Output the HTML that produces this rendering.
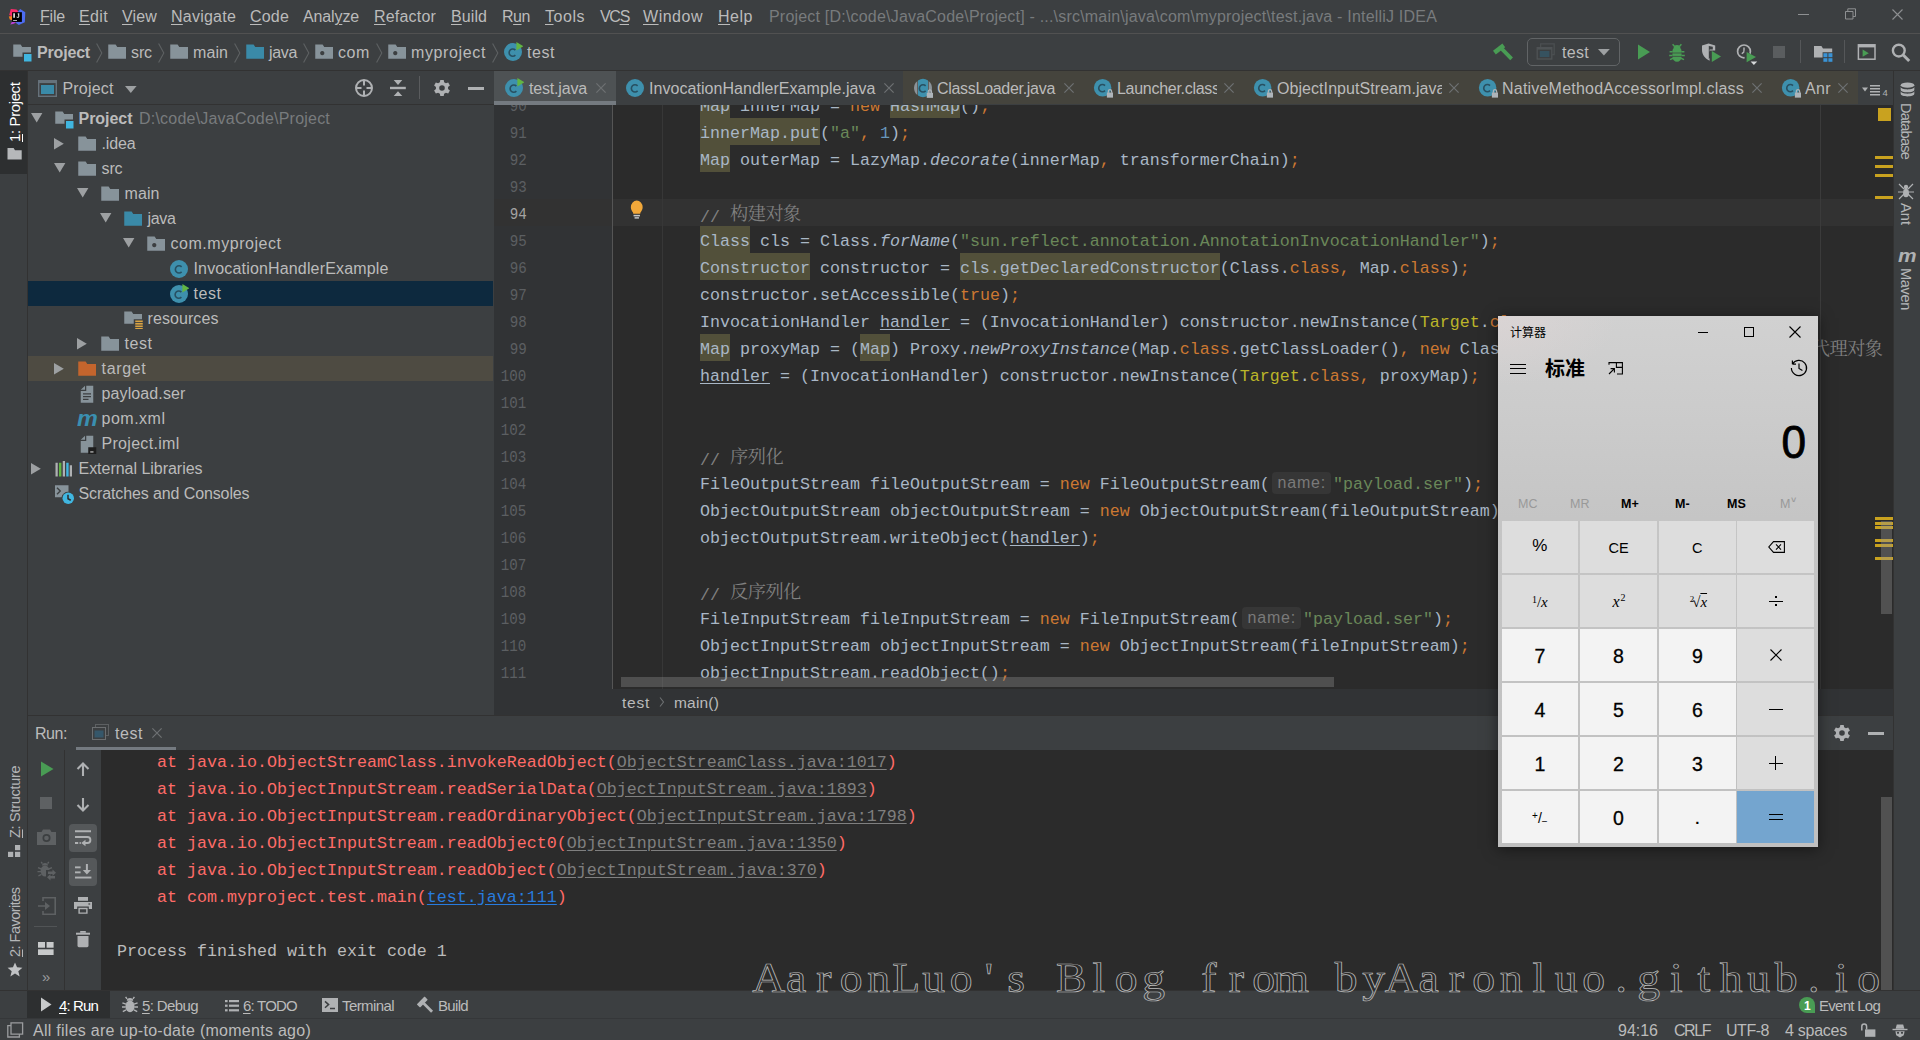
<!DOCTYPE html>
<html lang="en"><head><meta charset="utf-8"><title>Project - test.java - IntelliJ IDEA</title>
<style>
html,body{margin:0;padding:0;background:#3c3f41;}
body{width:1920px;height:1040px;overflow:hidden;font-family:"Liberation Sans","Noto Sans CJK SC",sans-serif;}
#root{position:relative;width:1920px;height:1040px;overflow:hidden;background:#3c3f41;}
#root div,#root svg,#root span.a{position:absolute;white-space:pre;}
#root div.box{overflow:hidden;}
.mono{font-family:"Liberation Mono","Noto Sans CJK SC",monospace;font-size:16.667px;}
.cj{font-family:"Noto Serif CJK SC","Noto Sans CJK SC",serif;font-size:18.200px;letter-spacing:-.5px;position:relative;top:-1.500px;}
u{text-decoration:underline;text-underline-offset:2px;}
i{font-style:italic;}
.k{color:#cc7832}.s{color:#6a8759}.n{color:#6897bb}.c{color:#808080}.y{color:#bbb529}
.h{background:#52503a;}

</style></head>
<body>
<div id="root">
<!-- menu bar -->
<div style="left:0px;top:33px;width:1920px;height:1px;background:#515151;"></div>
<svg style="left:8px;top:8px;" width="18" height="18" viewBox="0 0 18 18"><path fill="#fb2a6b" d="M2.800 1L8.500 1.500 10.400 3.500 4.500 8.500 1.200 7z"/><path fill="#4d6cf2" d="M10.200 3.200L12.200 1 17.300 4.200 16.800 14.200 10.800 17 8 15z"/><path fill="#fc801d" d="M.8 8.600L4.400 8v4.200L1.800 11.500z"/><path fill="#b93fd6" d="M2.200 16.600L4.200 13.400 8.400 14.600 5 16z"/><rect x="4.100" y="4.200" width="9.800" height="9.700" fill="#000"/><rect x="5.100" y="12" width="3.900" height="1" fill="#b4b4b4"/><path fill="#d4d4d4" d="M5.200 5.200h1.800v4.600H5.200zM9.600 5.200h1.700v3.400c0 .9-.6 1.300-1.400 1.300-.7 0-1.300-.3-1.700-.8l.7-.7c.3.300.5.500.8.500.4 0 .6-.2.600-.6z"/></svg>
<div style="left:40.00px;top:7.46px;font-size:16px;line-height:20px;color:#bbbbbb;letter-spacing:-0.195px;"><u>F</u>ile</div>
<div style="left:79.00px;top:7.46px;font-size:16px;line-height:20px;color:#bbbbbb;letter-spacing:0.357px;"><u>E</u>dit</div>
<div style="left:122.00px;top:7.46px;font-size:16px;line-height:20px;color:#bbbbbb;letter-spacing:0.152px;"><u>V</u>iew</div>
<div style="left:171.00px;top:7.46px;font-size:16px;line-height:20px;color:#bbbbbb;letter-spacing:0.231px;"><u>N</u>avigate</div>
<div style="left:250.00px;top:7.46px;font-size:16px;line-height:20px;color:#bbbbbb;letter-spacing:0.188px;"><u>C</u>ode</div>
<div style="left:303.00px;top:7.46px;font-size:16px;line-height:20px;color:#bbbbbb;letter-spacing:-0.132px;">Anal<u>y</u>ze</div>
<div style="left:374.00px;top:7.46px;font-size:16px;line-height:20px;color:#bbbbbb;letter-spacing:0.191px;"><u>R</u>efactor</div>
<div style="left:451.00px;top:7.46px;font-size:16px;line-height:20px;color:#bbbbbb;letter-spacing:0.084px;"><u>B</u>uild</div>
<div style="left:502.00px;top:7.46px;font-size:16px;line-height:20px;color:#bbbbbb;letter-spacing:-0.451px;">R<u>u</u>n</div>
<div style="left:545.00px;top:7.46px;font-size:16px;line-height:20px;color:#bbbbbb;letter-spacing:0.530px;"><u>T</u>ools</div>
<div style="left:600.00px;top:7.46px;font-size:16px;line-height:20px;color:#bbbbbb;letter-spacing:-1.299px;">VC<u>S</u></div>
<div style="left:643.00px;top:7.46px;font-size:16px;line-height:20px;color:#bbbbbb;letter-spacing:0.516px;"><u>W</u>indow</div>
<div style="left:718.00px;top:7.46px;font-size:16px;line-height:20px;color:#bbbbbb;letter-spacing:0.523px;"><u>H</u>elp</div>
<div style="left:769.00px;top:7.46px;font-size:16px;line-height:20px;color:#787b7d;letter-spacing:0.201px;">Project [D:\code\JavaCode\Project] - ...\src\main\java\com\myproject\test.java - IntelliJ IDEA</div>
<div style="left:1798px;top:14px;width:11px;height:1px;background:#8e9092;"></div>
<svg style="left:1845px;top:8px;" width="12" height="12" viewBox="0 0 12 12"><path fill="none" stroke="#8e9092" stroke-width="1" d="M.5 3.500h7.500v7.500H.5zM2.800 3.500V.8h7.700v7.700H8"/></svg>
<svg style="left:1892px;top:9px;" width="11" height="11" viewBox="0 0 11 11"><path fill="none" stroke="#8e9092" stroke-width="1.100" d="M.5.5l10 10M10.500.5l-10 10"/></svg>
<!-- nav bar -->
<div style="left:0px;top:70px;width:1920px;height:1px;background:#323232;"></div>
<svg style="left:12px;top:42px;" width="20" height="20" viewBox="0 0 16 16"><path fill="#87939a" d="M1 11.8h7.4V8.4h6.8V4H8.2L6.9 2H1z"/><rect x="9.6" y="9.6" width="6" height="6" fill="#40b6e0"/></svg>
<div style="left:37.00px;top:43.46px;font-size:16px;line-height:20px;color:#bbbbbb;font-weight:700;letter-spacing:-0.177px;">Project</div>
<svg style="left:96px;top:43px;" width="8" height="20" viewBox="0 0 8 20"><path fill="none" stroke="#5e6163" stroke-width="1.1" d="M.6 .5l5.2 9.500L.6 19.500"/></svg>
<svg style="left:107px;top:42px;" width="20" height="20" viewBox="0 0 16 16"><path fill="#87939a" d="M1 13.4h14.2V4H8.2L6.9 2H1z"/></svg>
<div style="left:131.00px;top:43.46px;font-size:16px;line-height:20px;color:#bbbbbb;letter-spacing:-0.109px;">src</div>
<svg style="left:158px;top:43px;" width="8" height="20" viewBox="0 0 8 20"><path fill="none" stroke="#5e6163" stroke-width="1.1" d="M.6 .5l5.2 9.500L.6 19.500"/></svg>
<svg style="left:169px;top:42px;" width="20" height="20" viewBox="0 0 16 16"><path fill="#87939a" d="M1 13.4h14.2V4H8.2L6.9 2H1z"/></svg>
<div style="left:193.00px;top:43.46px;font-size:16px;line-height:20px;color:#bbbbbb;letter-spacing:0.080px;">main</div>
<svg style="left:234px;top:43px;" width="8" height="20" viewBox="0 0 8 20"><path fill="none" stroke="#5e6163" stroke-width="1.1" d="M.6 .5l5.2 9.500L.6 19.500"/></svg>
<svg style="left:245px;top:42px;" width="20" height="20" viewBox="0 0 16 16"><path fill="#3a8aa8" d="M1 13.4h14.2V4H8.2L6.9 2H1z"/></svg>
<div style="left:269.00px;top:43.46px;font-size:16px;line-height:20px;color:#bbbbbb;letter-spacing:-0.338px;">java</div>
<svg style="left:303px;top:43px;" width="8" height="20" viewBox="0 0 8 20"><path fill="none" stroke="#5e6163" stroke-width="1.1" d="M.6 .5l5.2 9.500L.6 19.500"/></svg>
<svg style="left:314px;top:42px;" width="20" height="20" viewBox="0 0 16 16"><path fill="#87939a" fill-rule="evenodd" d="M1 13.4h14.2V4H8.2L6.9 2H1zM6.6 7.2a1.7 1.7 0 1 0 .01 0z"/></svg>
<div style="left:338.00px;top:43.46px;font-size:16px;line-height:20px;color:#bbbbbb;letter-spacing:0.591px;">com</div>
<svg style="left:376px;top:43px;" width="8" height="20" viewBox="0 0 8 20"><path fill="none" stroke="#5e6163" stroke-width="1.1" d="M.6 .5l5.2 9.500L.6 19.500"/></svg>
<svg style="left:387px;top:42px;" width="20" height="20" viewBox="0 0 16 16"><path fill="#87939a" fill-rule="evenodd" d="M1 13.4h14.2V4H8.2L6.9 2H1zM6.6 7.2a1.7 1.7 0 1 0 .01 0z"/></svg>
<div style="left:411.00px;top:43.46px;font-size:16px;line-height:20px;color:#bbbbbb;letter-spacing:0.628px;">myproject</div>
<svg style="left:492px;top:43px;" width="8" height="20" viewBox="0 0 8 20"><path fill="none" stroke="#5e6163" stroke-width="1.1" d="M.6 .5l5.2 9.500L.6 19.500"/></svg>
<svg style="left:503px;top:42px;" width="20" height="20" viewBox="0 0 16 16"><circle cx="8" cy="8" r="7.200" fill="#3e90ad"/><path fill="none" stroke="#285062" stroke-width="1.300" d="M9.90 10.50A2.900 2.900 0 1 1 9.90 6.50"/><path fill="#62b543" d="M10.700 0v6.800L16.300 3.400z"/></svg>
<div style="left:527.00px;top:43.46px;font-size:16px;line-height:20px;color:#bbbbbb;letter-spacing:0.553px;">test</div>
<svg style="left:1488px;top:38px;" width="28" height="26" viewBox="0 0 28 26"><g stroke="#499c54" fill="none"><path stroke-width="3.800" d="M13.600 10.600l10 10.200"/><path stroke-width="4.600" d="M6.400 14.600l9.400-7.200"/></g></svg>
<div style="left:1527px;top:38px;width:93px;height:28px;border:1px solid #616466;border-radius:5px;box-sizing:border-box"></div>
<svg style="left:1536px;top:43px;" width="20" height="17" viewBox="0 0 20 17"><path fill="none" stroke="#4b4f51" stroke-width="1.300" d="M4.600 4V.8h13.600v10.800h-2"/><rect x="1.200" y="4.600" width="14.600" height="11.400" fill="#3c3f41" stroke="#4f5355" stroke-width="1.300"/><rect x="1.200" y="4.600" width="14.600" height="2" fill="#4f5355"/><rect x="3.800" y="8" width="9.600" height="6" fill="#36525f"/></svg>
<div style="left:1562.00px;top:42.96px;font-size:16px;line-height:20px;color:#bbbbbb;letter-spacing:0.303px;">test</div>
<svg style="left:1598px;top:49px;" width="12" height="7" viewBox="0 0 12 7"><path fill="#9da0a2" d="M0 0h11.800L5.900 6.600z"/></svg>
<svg style="left:1637px;top:44px;" width="14" height="16" viewBox="0 0 14 16"><path fill="#499c54" d="M1 .6v14.800l12-7.400z"/></svg>
<svg style="left:1667px;top:43px;" width="20" height="20" viewBox="0 0 20 20"><g fill="#499c54"><path d="M5.400 8.200a4.600 4.600 0 0 1 9.200 0v5.200a4.600 5.400 0 0 1-9.200 0z"/><path d="M6.600 5.200a3.400 3.200 0 0 1 6.800 0z"/></g><g stroke="#499c54" stroke-width="1.500" fill="none"><path d="M7.400 3.200L5.600 1.200M12.600 3.200l1.800-2M2.600 8.800h3M14.400 8.800h3M2.200 12.400h3.400M14.400 12.400h3.400M3 16.600l3-1.400M17 16.600l-3-1.400"/></g><g stroke="#3c3f41" stroke-width=".7"><path d="M5 10h10M5 13.400h10"/></g></svg>
<svg style="left:1700px;top:42px;" width="24" height="22" viewBox="0 0 24 22"><path fill="#afb1b3" d="M2 3.400L8.600 1.600l6.600 1.800v5H9.600v10.400C4.800 16.400 2 12.400 2 8z"/><path fill="#3c3f41" d="M8.800 4v13C11 15.600 12 13 12.600 9.400H9.600V7.400h3.200V4.800z"/><path fill="#499c54" d="M11.800 9v11l9.200-5.500z"/></svg>
<svg style="left:1735px;top:42px;" width="26" height="24" viewBox="0 0 26 24"><circle cx="9" cy="9.400" r="6.400" fill="none" stroke="#afb1b3" stroke-width="1.700"/><path fill="none" stroke="#afb1b3" stroke-width="1.500" d="M9 5.400v4.400l-2.200 2"/><path fill="#3c3f41" d="M9.600 8.600v13h9l3-6z"/><path fill="#499c54" d="M11.600 10v10.200l9.400-5.100z"/><path fill="#d6d8da" d="M15.600 19.400h6.600l-3.300 3.600z"/></svg>
<div style="left:1773px;top:46px;width:12px;height:12px;background:#5a5d5f;"></div>
<div style="left:1800px;top:40px;width:1px;height:23px;background:#555759;"></div>
<svg style="left:1813px;top:44px;" width="22" height="20" viewBox="0 0 22 20"><path fill="#afb1b3" d="M1 13.600h8.600V8.200h9.600V4.600H10L8.400 2H1z"/><g fill="#3a93d6"><rect x="10.400" y="9.200" width="4" height="4"/><rect x="15.400" y="9.200" width="4" height="4"/><rect x="10.400" y="14.200" width="4" height="3.600"/><rect x="15.400" y="14.200" width="4" height="3.600"/></g></svg>
<div style="left:1844px;top:40px;width:1px;height:23px;background:#555759;"></div>
<svg style="left:1857px;top:44px;" width="20" height="16" viewBox="0 0 20 16"><rect x="1.400" y=".8" width="16.600" height="14.400" fill="none" stroke="#afb1b3" stroke-width="1.500"/><rect x="1.400" y=".8" width="16.600" height="2.600" fill="#afb1b3"/><path fill="#499c54" d="M5.600 5.600v7.200l6.200-3.600z"/></svg>
<svg style="left:1891px;top:42px;" width="22" height="22" viewBox="0 0 22 22"><circle cx="7.800" cy="8.600" r="5.900" fill="none" stroke="#afb1b3" stroke-width="2.400"/><path stroke="#afb1b3" stroke-width="3" d="M12.200 13l6 6"/></svg>
<!-- left stripe -->
<div style="left:0px;top:71px;width:27px;height:969px;background:#3c3f41;"></div>
<div style="left:27px;top:71px;width:1px;height:920px;background:#323232;"></div>
<div style="left:0px;top:71px;width:27px;height:103px;background:#2d2f30;"></div>
<div style="left:14.8px;top:141.5px;font-size:15px;line-height:20px;color:#ffffff;letter-spacing:-0.386px;transform-origin:0 0;transform:rotate(-90deg) translate(0,-10px)"><u>1</u>: Project</div>
<svg style="left:6.5px;top:146.5px;" width="16" height="13" viewBox="0 0 16 13"><path fill="#b6b8ba" d="M.5 12.5h14.200V3.200H8L6.600 1H.5z"/></svg>
<div style="left:14.8px;top:838px;font-size:14.5px;line-height:20px;color:#b4b6b8;letter-spacing:-0.287px;transform-origin:0 0;transform:rotate(-90deg) translate(0,-10px)"><u>Z</u>: Structure</div>
<svg style="left:8px;top:845px;" width="13" height="13" viewBox="0 0 13 13"><g fill="#afb1b3"><rect x="7" y="0" width="5.200" height="5.200"/><rect x="0" y="6.800" width="5.200" height="5.200"/><rect x="7" y="6.800" width="5.200" height="5.200"/></g></svg>
<div style="left:14.8px;top:957px;font-size:14.5px;line-height:20px;color:#b4b6b8;letter-spacing:-0.521px;transform-origin:0 0;transform:rotate(-90deg) translate(0,-10px)"><u>2</u>: Favorites</div>
<svg style="left:6.5px;top:962px;" width="16" height="15" viewBox="0 0 20 19"><path fill="#c0c2c4" d="M10 .6l2.6 6.200 6.800.5-5.200 4.400 1.700 6.600L10 14.700 4.100 18.300l1.700-6.600L.6 7.300l6.800-.5z"/></svg>
<!-- right stripe -->
<div style="left:1893px;top:71px;width:27px;height:920px;background:#3c3f41;"></div>
<div style="left:1893px;top:71px;width:1px;height:920px;background:#323232;"></div>
<svg style="left:1899.5px;top:82px;" width="15" height="16.5" viewBox="0 0 18 19"><g fill="#afb1b3"><ellipse cx="9" cy="3.4" rx="8.200" ry="3.200"/><path d="M.8 5.4c0 4.2 16.4 4.200 16.4 0v3.400c0 4.200-16.400 4.200-16.400 0zM.8 10.400c0 4.200 16.400 4.200 16.400 0v3.400c0 4.200-16.400 4.200-16.400 0z"/></g></svg>
<div style="left:1906px;top:103px;font-size:14.5px;line-height:20px;color:#b4b6b8;letter-spacing:-0.759px;transform-origin:0 0;transform:rotate(90deg) translate(0,-10px)">Database</div>
<svg style="left:1897px;top:182px;" width="18" height="18" viewBox="0 0 18 18"><g fill="#afb1b3"><ellipse cx="9" cy="11" rx="3" ry="4.2"/><circle cx="9" cy="5" r="2.2"/></g><g stroke="#afb1b3" stroke-width="1.2" fill="none"><path d="M2 2l5 5M16 2l-5 5M1 10h5M17 10h-5M2 17l5-5M16 17l-5-5"/></g></svg>
<div style="left:1906px;top:203px;font-size:14.5px;line-height:20px;color:#b4b6b8;letter-spacing:0.079px;transform-origin:0 0;transform:rotate(90deg) translate(0,-10px)">Ant</div>
<div style="left:1898px;top:246px;font-size:19px;line-height:20px;font-weight:700;font-style:italic;color:#afb1b3;transform:scale(1.1,1);transform-origin:0 0">m</div>
<div style="left:1906px;top:268px;font-size:14.5px;line-height:20px;color:#b4b6b8;letter-spacing:-0.304px;transform-origin:0 0;transform:rotate(90deg) translate(0,-10px)">Maven</div>
<!-- bottom bar -->
<div style="left:0px;top:990px;width:1920px;height:1px;background:#323232;"></div>
<div style="left:27px;top:991px;width:83px;height:27px;background:#2d2f30;"></div>
<div style="left:0px;top:1018px;width:1920px;height:1px;background:#353739;"></div>
<svg style="left:40px;top:997px;" width="12" height="15" viewBox="0 0 12 15"><path fill="#c8cacb" d="M1 .5v14l10.5-7z"/></svg>
<div style="left:59.00px;top:996.10px;font-size:15px;line-height:19px;color:#ffffff;letter-spacing:-0.866px;"><u>4</u>: Run</div>
<svg style="left:121px;top:996px;" width="18" height="18" viewBox="0 0 18 18"><g fill="#afb1b3"><ellipse cx="9" cy="10.4" rx="4.6" ry="5.8"/><path d="M5.8 4.8a3.2 2.8 0 0 1 6.400 0z"/><g stroke="#afb1b3" stroke-width="1.4" fill="none"><path d="M1.4 6.8l3.600 1.4M16.600 6.800l-3.600 1.4M1 11h3.600M17 11h-3.600M1.800 15.600l3.200-1.800M16.200 15.600l-3.200-1.800M6 2.800L4.600.8M12 2.800L13.400.8"/></g></g></svg>
<div style="left:142.00px;top:996.10px;font-size:15px;line-height:19px;color:#bbbbbb;letter-spacing:-0.610px;"><u>5</u>: Debug</div>
<svg style="left:225px;top:999.5px;" width="14" height="12" viewBox="0 0 14 12"><g fill="#afb1b3"><rect x="0" y="0" width="2.600" height="2.200"/><rect x="4" y="0" width="10" height="2.200"/><rect x="0" y="4.600" width="2.600" height="2.200"/><rect x="4" y="4.600" width="10" height="2.200"/><rect x="0" y="9.200" width="2.600" height="2.200"/><rect x="4" y="9.200" width="10" height="2.200"/></g></svg>
<div style="left:243.00px;top:996.10px;font-size:15px;line-height:19px;color:#bbbbbb;letter-spacing:-0.781px;"><u>6</u>: TODO</div>
<svg style="left:322px;top:998px;" width="16" height="14" viewBox="0 0 16 14"><rect x="0" y="0" width="16" height="14" fill="#afb1b3"/><path fill="none" stroke="#3c3f41" stroke-width="1.5" d="M3 3.400l3.600 3.200L3 9.800M8 10.600h5"/></svg>
<div style="left:342.00px;top:996.10px;font-size:15px;line-height:19px;color:#bbbbbb;letter-spacing:-0.585px;">Terminal</div>
<svg style="left:417px;top:996px;" width="18" height="18" viewBox="0 0 18 18"><g transform="rotate(-45 9 9)" fill="#afb1b3"><rect x="3" y="2" width="11" height="4.600" rx=".5"/><rect x="7.200" y="6" width="2.800" height="12"/></g></svg>
<div style="left:438.00px;top:996.10px;font-size:15px;line-height:19px;color:#bbbbbb;letter-spacing:-0.671px;">Build</div>
<div style="left:1799px;top:997px;width:16px;height:16px;border-radius:8px 8px 0 8px;background:#499c54"></div>
<div style="left:1804.00px;top:999.34px;font-size:12px;line-height:15px;color:#ffffff;font-weight:700;">1</div>
<div style="left:1819.00px;top:996.10px;font-size:15px;line-height:19px;color:#bbbbbb;letter-spacing:-0.728px;">Event Log</div>
<!-- status bar -->
<svg style="left:6.5px;top:1022px;" width="17" height="16" viewBox="0 0 17 16"><path fill="none" stroke="#9a9c9e" stroke-width="1.300" d="M3.800 3.600H.8v11.400h11.600v-2.800M4 .8h11.600v11.400H4z"/></svg>
<div style="left:33.00px;top:1020.66px;font-size:16px;line-height:20px;color:#bbbbbb;letter-spacing:0.272px;">All files are up-to-date (moments ago)</div>
<div style="left:1618.00px;top:1020.66px;font-size:16px;line-height:20px;color:#bbbbbb;letter-spacing:-0.008px;">94:16</div>
<div style="left:1674.00px;top:1020.66px;font-size:16px;line-height:20px;color:#bbbbbb;letter-spacing:-1.445px;">CRLF</div>
<div style="left:1726.00px;top:1020.66px;font-size:16px;line-height:20px;color:#bbbbbb;letter-spacing:-0.466px;">UTF-8</div>
<div style="left:1785.00px;top:1020.66px;font-size:16px;line-height:20px;color:#bbbbbb;letter-spacing:-0.255px;">4 spaces</div>
<svg style="left:1860px;top:1022px;" width="17" height="16" viewBox="0 0 17 16"><rect x="5" y="7.400" width="10.400" height="7.400" fill="#afb1b3"/><path fill="none" stroke="#afb1b3" stroke-width="1.500" d="M1.800 8.400V4.400a2.400 2.400 0 0 1 4.800 0v3"/></svg>
<svg style="left:1892px;top:1024px;" width="16" height="14" viewBox="0 0 16 14"><g fill="#afb1b3"><path d="M.5 4.800h15v1.400H.5z"/><path d="M3.600 4.800L4.800.4h6.400l1.200 4.400z"/><path d="M3.400 7.200h9.200l-.8 4L8 13.600 4.200 11.200z"/></g><g fill="#3c3f41"><circle cx="6" cy="8.800" r="1.100"/><circle cx="10" cy="8.800" r="1.100"/></g></svg>
<!-- project panel -->
<div style="left:28px;top:104px;width:466px;height:1px;background:#323232;"></div>
<svg style="left:38px;top:80px;" width="19" height="17" viewBox="0 0 19 17"><rect x=".7" y=".7" width="17.600" height="15.600" fill="#3c3f41" stroke="#66727b" stroke-width="1.400"/><rect x=".7" y=".7" width="17.600" height="2.400" fill="#66727b"/><rect x="3" y="5" width="13" height="9" fill="#3a8aa8"/></svg>
<div style="left:62.50px;top:79.46px;font-size:16px;line-height:20px;color:#bbbbbb;letter-spacing:0.172px;">Project</div>
<svg style="left:125px;top:86px;" width="12" height="8" viewBox="0 0 12 8"><path fill="#9da0a2" d="M0 0h11.600L5.800 7z"/></svg>
<svg style="left:354px;top:78px;" width="20" height="20" viewBox="0 0 20 20"><circle cx="10" cy="10" r="8" fill="none" stroke="#afb1b3" stroke-width="2"/><g stroke="#afb1b3" stroke-width="2"><path d="M10 2.500v5M10 12.500v5M2.500 10h5M12.500 10h5"/></g></svg>
<svg style="left:390px;top:79px;" width="16" height="18" viewBox="0 0 16 18"><g fill="#afb1b3"><rect x="0" y="7.800" width="15.800" height="2.400"/><path d="M3.700 1h8.600L8 6zM3.700 17h8.600L8 12.200z"/></g></svg>
<div style="left:419px;top:76px;width:1px;height:23px;background:#5a5c5e;"></div>
<svg style="left:432px;top:78px;" width="20" height="20" viewBox="0 0 20 20"><path fill="#afb1b3" fill-rule="evenodd" d="M12.09 4.27L11.73 1.88L8.27 1.88L7.91 4.27A6.1 6.1 0 0 0 6.08 5.33L3.83 4.45L2.11 7.44L3.99 8.94A6.1 6.1 0 0 0 3.99 11.06L2.11 12.56L3.83 15.55L6.08 14.67A6.1 6.1 0 0 0 7.91 15.73L8.27 18.12L11.73 18.12L12.09 15.73A6.1 6.1 0 0 0 13.92 14.67L16.17 15.55L17.89 12.56L16.01 11.06A6.1 6.1 0 0 0 16.01 8.94L17.89 7.44L16.17 4.45L13.92 5.33A6.1 6.1 0 0 0 12.09 4.27ZM12.80 10A2.8 2.8 0 1 0 7.20 10A2.8 2.8 0 1 0 12.80 10Z"/></svg>
<div style="left:468px;top:87px;width:16px;height:2.5px;background:#afb1b3;"></div>
<div style="left:28px;top:281px;width:465px;height:25px;background:#0d293e;"></div>
<div style="left:28px;top:356px;width:465px;height:25px;background:#4e4b42;"></div>
<svg style="left:31px;top:113px;" width="12" height="10" viewBox="0 0 12 10"><path fill="#9da0a2" d="M0 0h11.400L5.700 9.600z"/></svg>
<svg style="left:54px;top:109px;" width="20" height="20" viewBox="0 0 16 16"><path fill="#87939a" d="M1 11.8h7.4V8.4h6.8V4H8.2L6.9 2H1z"/><rect x="9.6" y="9.6" width="6" height="6" fill="#40b6e0"/></svg>
<div style="left:78.50px;top:109.46px;font-size:16px;line-height:20px;color:#bbbbbb;font-weight:700;letter-spacing:-0.035px;">Project</div>
<div style="left:139.00px;top:109.46px;font-size:16px;line-height:20px;color:#787b7d;letter-spacing:0.214px;">D:\code\JavaCode\Project</div>
<svg style="left:53.8px;top:137.5px;" width="10" height="12" viewBox="0 0 10 12"><path fill="#9da0a2" d="M0 0v11.400L9.800 5.700z"/></svg>
<svg style="left:77px;top:134px;" width="20" height="20" viewBox="0 0 16 16"><path fill="#87939a" d="M1 13.4h14.2V4H8.2L6.9 2H1z"/></svg>
<div style="left:101.50px;top:134.46px;font-size:16px;line-height:20px;color:#bbbbbb;letter-spacing:-0.139px;">.idea</div>
<svg style="left:54px;top:163px;" width="12" height="10" viewBox="0 0 12 10"><path fill="#9da0a2" d="M0 0h11.400L5.700 9.600z"/></svg>
<svg style="left:77px;top:159px;" width="20" height="20" viewBox="0 0 16 16"><path fill="#87939a" d="M1 13.4h14.2V4H8.2L6.9 2H1z"/></svg>
<div style="left:101.50px;top:159.46px;font-size:16px;line-height:20px;color:#bbbbbb;letter-spacing:-0.109px;">src</div>
<svg style="left:77px;top:188px;" width="12" height="10" viewBox="0 0 12 10"><path fill="#9da0a2" d="M0 0h11.400L5.700 9.600z"/></svg>
<svg style="left:100px;top:184px;" width="20" height="20" viewBox="0 0 16 16"><path fill="#87939a" d="M1 13.4h14.2V4H8.2L6.9 2H1z"/></svg>
<div style="left:124.50px;top:184.46px;font-size:16px;line-height:20px;color:#bbbbbb;letter-spacing:0.080px;">main</div>
<svg style="left:100px;top:213px;" width="12" height="10" viewBox="0 0 12 10"><path fill="#9da0a2" d="M0 0h11.400L5.700 9.600z"/></svg>
<svg style="left:123px;top:209px;" width="20" height="20" viewBox="0 0 16 16"><path fill="#3a8aa8" d="M1 13.4h14.2V4H8.2L6.9 2H1z"/></svg>
<div style="left:147.50px;top:209.46px;font-size:16px;line-height:20px;color:#bbbbbb;letter-spacing:-0.338px;">java</div>
<svg style="left:123px;top:238px;" width="12" height="10" viewBox="0 0 12 10"><path fill="#9da0a2" d="M0 0h11.400L5.700 9.600z"/></svg>
<svg style="left:146px;top:234px;" width="20" height="20" viewBox="0 0 16 16"><path fill="#87939a" fill-rule="evenodd" d="M1 13.4h14.2V4H8.2L6.9 2H1zM6.6 7.2a1.7 1.7 0 1 0 .01 0z"/></svg>
<div style="left:170.50px;top:234.46px;font-size:16px;line-height:20px;color:#bbbbbb;letter-spacing:0.537px;">com.myproject</div>
<svg style="left:169px;top:259px;" width="20" height="20" viewBox="0 0 16 16"><circle cx="8" cy="8" r="7.200" fill="#3e90ad"/><path fill="none" stroke="#285062" stroke-width="1.300" d="M10.10 10.30A2.900 2.900 0 1 1 10.10 6.30"/></svg>
<div style="left:193.50px;top:259.46px;font-size:16px;line-height:20px;color:#bbbbbb;letter-spacing:0.158px;">InvocationHandlerExample</div>
<svg style="left:169px;top:284px;" width="20" height="20" viewBox="0 0 16 16"><circle cx="8" cy="8" r="7.200" fill="#3e90ad"/><path fill="none" stroke="#285062" stroke-width="1.300" d="M9.90 10.50A2.900 2.900 0 1 1 9.90 6.50"/><path fill="#62b543" d="M10.700 0v6.800L16.300 3.400z"/></svg>
<div style="left:193.50px;top:284.46px;font-size:16px;line-height:20px;color:#bbbbbb;letter-spacing:0.553px;">test</div>
<svg style="left:123px;top:309px;" width="20" height="20" viewBox="0 0 16 16"><path fill="#87939a" d="M1 11.8h7.6V8.2h6.6V4H8.2L6.9 2H1z"/><g fill="#d9a343"><rect x="9.8" y="9.2" width="6" height="1.3"/><rect x="9.8" y="11.2" width="6" height="1.3"/><rect x="9.8" y="13.2" width="6" height="1.3"/><rect x="9.8" y="15.2" width="6" height=".8"/></g></svg>
<div style="left:147.50px;top:309.46px;font-size:16px;line-height:20px;color:#bbbbbb;letter-spacing:0.083px;">resources</div>
<svg style="left:76.8px;top:337.5px;" width="10" height="12" viewBox="0 0 10 12"><path fill="#9da0a2" d="M0 0v11.400L9.800 5.700z"/></svg>
<svg style="left:100px;top:334px;" width="20" height="20" viewBox="0 0 16 16"><path fill="#87939a" d="M1 13.4h14.2V4H8.2L6.9 2H1z"/></svg>
<div style="left:124.50px;top:334.46px;font-size:16px;line-height:20px;color:#bbbbbb;letter-spacing:0.553px;">test</div>
<svg style="left:53.8px;top:362.5px;" width="10" height="12" viewBox="0 0 10 12"><path fill="#9da0a2" d="M0 0v11.400L9.800 5.700z"/></svg>
<svg style="left:77px;top:359px;" width="20" height="20" viewBox="0 0 16 16"><path fill="#c4652d" d="M1 13.4h14.2V4H8.2L6.9 2H1z"/></svg>
<div style="left:101.50px;top:359.46px;font-size:16px;line-height:20px;color:#bbbbbb;letter-spacing:0.681px;">target</div>
<svg style="left:77px;top:384px;" width="20" height="20" viewBox="0 0 16 16"><path fill="#87939a" d="M3 15V5.6h4.4V1.4H13V15z"/><path fill="#87939a" d="M3 4.6L6.4 1.4v3.2z"/><g fill="#3c3f41"><rect x="4.8" y="7.4" width="6.4" height="1"/><rect x="4.8" y="9.6" width="6.4" height="1"/><rect x="4.8" y="11.8" width="4.4" height="1"/></g></svg>
<div style="left:101.50px;top:384.46px;font-size:16px;line-height:20px;color:#bbbbbb;letter-spacing:0.116px;">payload.ser</div>
<div style="left:77px;top:407.5px;font-size:22.500px;line-height:22px;font-weight:700;font-style:italic;color:#3a8fb0;transform-origin:0 50%;transform:scale(1.04,1)">m</div>
<div style="left:101.50px;top:409.46px;font-size:16px;line-height:20px;color:#bbbbbb;letter-spacing:0.507px;">pom.xml</div>
<svg style="left:77px;top:434px;" width="20" height="20" viewBox="0 0 16 16"><path fill="#87939a" d="M3 15V5.6h4.4V1.4H13V15z"/><path fill="#87939a" d="M3 4.6L6.4 1.4v3.2z"/><rect x="9" y="10.6" width="6.4" height="5.4" fill="#1e1e1e"/><rect x="10.6" y="13.9" width="2.6" height=".9" fill="#d0d0d0"/></svg>
<div style="left:101.50px;top:434.46px;font-size:16px;line-height:20px;color:#bbbbbb;letter-spacing:0.302px;">Project.iml</div>
<svg style="left:30.8px;top:462.5px;" width="10" height="12" viewBox="0 0 10 12"><path fill="#9da0a2" d="M0 0v11.400L9.800 5.700z"/></svg>
<svg style="left:54px;top:459px;" width="20" height="20" viewBox="0 0 16 16"><g fill="#afb1b3"><rect x="1.2" y="3" width="1.8" height="11"/><rect x="7" y="1.6" width="1.8" height="12.4"/><rect x="12.6" y="5" width="1.8" height="9"/></g><rect x="4" y="3" width="1.9" height="11" fill="#62b543"/><rect x="9.8" y="3" width="1.9" height="11" fill="#40b6e0"/></svg>
<div style="left:78.50px;top:459.46px;font-size:16px;line-height:20px;color:#bbbbbb;letter-spacing:-0.028px;">External Libraries</div>
<svg style="left:54px;top:484px;" width="20" height="20" viewBox="0 0 16 16"><path fill="#87939a" d="M.8 1h10.8v5.2A5.3 5.3 0 0 0 6 10.6H.8z"/><path fill="none" stroke="#3c3f41" stroke-width="1.1" d="M2.4 3l2.6 2.6L2.4 8.2"/><circle cx="11.4" cy="11.4" r="4.6" fill="#40b6e0"/><path fill="none" stroke="#2b2b2b" stroke-width="1.2" d="M11.2 8.6v3.2l2.2 1.2"/></svg>
<div style="left:78.50px;top:484.46px;font-size:16px;line-height:20px;color:#bbbbbb;letter-spacing:-0.110px;">Scratches and Consoles</div>
<!-- editor -->
<div style="left:494px;top:105px;width:1399px;height:585px;background:#2b2b2b;"></div>
<div style="left:494px;top:105px;width:118px;height:585px;background:#313335;"></div>
<div style="left:612px;top:105px;width:1px;height:585px;background:#555555;"></div>
<div style="left:494px;top:199px;width:1399px;height:27px;background:#323232;"></div>
<div style="left:612px;top:199px;width:1px;height:27px;background:#555555;"></div>
<div style="left:662px;top:105px;width:1px;height:585px;background:#373737;"></div>
<div style="left:1820px;top:105px;width:1px;height:585px;background:#3b3b3b;"></div>
<div class="mono" style="right:1393.5px;top:93.1px;height:27px;line-height:27px;font-size:17.400px;transform:scaleX(.815);transform-origin:100% 50%;color:#5c5f62">90</div>
<div class="mono" style="right:1393.5px;top:120.1px;height:27px;line-height:27px;font-size:17.400px;transform:scaleX(.815);transform-origin:100% 50%;color:#5c5f62">91</div>
<div class="mono" style="right:1393.5px;top:147.1px;height:27px;line-height:27px;font-size:17.400px;transform:scaleX(.815);transform-origin:100% 50%;color:#5c5f62">92</div>
<div class="mono" style="right:1393.5px;top:174.1px;height:27px;line-height:27px;font-size:17.400px;transform:scaleX(.815);transform-origin:100% 50%;color:#5c5f62">93</div>
<div class="mono" style="right:1393.5px;top:201.1px;height:27px;line-height:27px;font-size:17.400px;transform:scaleX(.815);transform-origin:100% 50%;color:#a4a3a3">94</div>
<div class="mono" style="right:1393.5px;top:228.1px;height:27px;line-height:27px;font-size:17.400px;transform:scaleX(.815);transform-origin:100% 50%;color:#5c5f62">95</div>
<div class="mono" style="right:1393.5px;top:255.1px;height:27px;line-height:27px;font-size:17.400px;transform:scaleX(.815);transform-origin:100% 50%;color:#5c5f62">96</div>
<div class="mono" style="right:1393.5px;top:282.1px;height:27px;line-height:27px;font-size:17.400px;transform:scaleX(.815);transform-origin:100% 50%;color:#5c5f62">97</div>
<div class="mono" style="right:1393.5px;top:309.1px;height:27px;line-height:27px;font-size:17.400px;transform:scaleX(.815);transform-origin:100% 50%;color:#5c5f62">98</div>
<div class="mono" style="right:1393.5px;top:336.1px;height:27px;line-height:27px;font-size:17.400px;transform:scaleX(.815);transform-origin:100% 50%;color:#5c5f62">99</div>
<div class="mono" style="right:1393.5px;top:363.1px;height:27px;line-height:27px;font-size:17.400px;transform:scaleX(.815);transform-origin:100% 50%;color:#5c5f62">100</div>
<div class="mono" style="right:1393.5px;top:390.1px;height:27px;line-height:27px;font-size:17.400px;transform:scaleX(.815);transform-origin:100% 50%;color:#5c5f62">101</div>
<div class="mono" style="right:1393.5px;top:417.1px;height:27px;line-height:27px;font-size:17.400px;transform:scaleX(.815);transform-origin:100% 50%;color:#5c5f62">102</div>
<div class="mono" style="right:1393.5px;top:444.1px;height:27px;line-height:27px;font-size:17.400px;transform:scaleX(.815);transform-origin:100% 50%;color:#5c5f62">103</div>
<div class="mono" style="right:1393.5px;top:471.1px;height:27px;line-height:27px;font-size:17.400px;transform:scaleX(.815);transform-origin:100% 50%;color:#5c5f62">104</div>
<div class="mono" style="right:1393.5px;top:498.1px;height:27px;line-height:27px;font-size:17.400px;transform:scaleX(.815);transform-origin:100% 50%;color:#5c5f62">105</div>
<div class="mono" style="right:1393.5px;top:525.1px;height:27px;line-height:27px;font-size:17.400px;transform:scaleX(.815);transform-origin:100% 50%;color:#5c5f62">106</div>
<div class="mono" style="right:1393.5px;top:552.1px;height:27px;line-height:27px;font-size:17.400px;transform:scaleX(.815);transform-origin:100% 50%;color:#5c5f62">107</div>
<div class="mono" style="right:1393.5px;top:579.1px;height:27px;line-height:27px;font-size:17.400px;transform:scaleX(.815);transform-origin:100% 50%;color:#5c5f62">108</div>
<div class="mono" style="right:1393.5px;top:606.1px;height:27px;line-height:27px;font-size:17.400px;transform:scaleX(.815);transform-origin:100% 50%;color:#5c5f62">109</div>
<div class="mono" style="right:1393.5px;top:633.1px;height:27px;line-height:27px;font-size:17.400px;transform:scaleX(.815);transform-origin:100% 50%;color:#5c5f62">110</div>
<div class="mono" style="right:1393.5px;top:660.1px;height:27px;line-height:27px;font-size:17.400px;transform:scaleX(.815);transform-origin:100% 50%;color:#5c5f62">111</div>
<svg style="left:629.5px;top:199.5px;" width="13.5" height="20" viewBox="0 0 13.5 20"><g transform="scale(.844,.975)"><path fill="#f2a83a" d="M8 .6a7 7 0 0 1 7 6.800c0 2.600-1.600 4-2.400 5.200-.4.600-.4 1.400-.4 1.400H3.800s0-.8-.4-1.400C2.600 11.400 1 10 1 7.400A7 7 0 0 1 8 .6z"/><rect x="4.200" y="15.200" width="7.600" height="1.600" fill="#c4c6c8"/><rect x="5.400" y="17.600" width="5.200" height="1.500" fill="#c4c6c8"/></g></svg>
<div style="left:700px;top:91px;width:30px;height:27px;background:#52503a;"></div>
<div style="left:890px;top:91px;width:70px;height:27px;background:#52503a;"></div>
<div class="mono" style="left:700px;top:92.8px;height:27px;line-height:27px;color:#a9b7c6">Map innerMap = <span class="k">new </span>HashMap()<span class="k">;</span></div>
<div style="left:700px;top:118px;width:120px;height:27px;background:#52503a;"></div>
<div class="mono" style="left:700px;top:119.8px;height:27px;line-height:27px;color:#a9b7c6">innerMap.put(<span class="s">"a"</span><span class="k">,</span><span class="n"> 1</span>)<span class="k">;</span></div>
<div style="left:700px;top:145px;width:30px;height:27px;background:#52503a;"></div>
<div class="mono" style="left:700px;top:146.8px;height:27px;line-height:27px;color:#a9b7c6">Map outerMap = LazyMap.<i>decorate</i>(innerMap<span class="k">,</span> transformerChain)<span class="k">;</span></div>
<div class="mono" style="left:700px;top:200.8px;height:27px;line-height:27px;color:#a9b7c6"><span class="c">// </span><span class="c cj">构建对象</span></div>
<div style="left:700px;top:226px;width:50px;height:27px;background:#52503a;"></div>
<div class="mono" style="left:700px;top:227.8px;height:27px;line-height:27px;color:#a9b7c6">Class cls = Class.<i>forName</i>(<span class="s">"sun.reflect.annotation.AnnotationInvocationHandler"</span>)<span class="k">;</span></div>
<div style="left:700px;top:253px;width:110px;height:27px;background:#52503a;"></div>
<div style="left:960px;top:253px;width:260px;height:27px;background:#52503a;"></div>
<div class="mono" style="left:700px;top:254.8px;height:27px;line-height:27px;color:#a9b7c6">Constructor constructor = cls.getDeclaredConstructor(Class.<span class="k">class</span><span class="k">,</span> Map.<span class="k">class</span>)<span class="k">;</span></div>
<div class="mono" style="left:700px;top:281.8px;height:27px;line-height:27px;color:#a9b7c6">constructor.setAccessible(<span class="k">true</span>)<span class="k">;</span></div>
<div class="mono" style="left:700px;top:308.8px;height:27px;line-height:27px;color:#a9b7c6">InvocationHandler <u>handler</u> = (InvocationHandler) constructor.newInstance(<span class="y">Target</span>.<span class="k">class</span></div>
<div style="left:700px;top:334px;width:30px;height:27px;background:#52503a;"></div>
<div style="left:860px;top:334px;width:30px;height:27px;background:#52503a;"></div>
<div class="mono" style="left:700px;top:335.8px;height:27px;line-height:27px;color:#a9b7c6">Map proxyMap = (Map) Proxy.<i>newProxyInstance</i>(Map.<span class="k">class</span>.getClassLoader()<span class="k">,</span> <span class="k">new </span>Class[]</div>
<div class="mono" style="left:1811.800px;top:335.8px;height:27px;line-height:27px;color:#808080"><span class="cj">代理对象</span></div>
<div class="mono" style="left:700px;top:362.8px;height:27px;line-height:27px;color:#a9b7c6"><u>handler</u> = (InvocationHandler) constructor.newInstance(<span class="y">Target</span>.<span class="k">class</span><span class="k">,</span> proxyMap)<span class="k">;</span></div>
<div class="mono" style="left:700px;top:443.8px;height:27px;line-height:27px;color:#a9b7c6"><span class="c">// </span><span class="c cj">序列化</span></div>
<div style="left:1272px;top:471.5px;width:59px;height:22px;border-radius:4px;background:#363636"></div>
<div style="left:1277.50px;top:473.16px;font-size:16px;line-height:20px;color:#7a7a7a;letter-spacing:0.806px;">name:</div>
<div class="mono" style="left:700px;top:470.8px;height:27px;line-height:27px;color:#a9b7c6">FileOutputStream fileOutputStream = <span class="k">new </span>FileOutputStream(</div>
<div class="mono" style="left:1333px;top:470.8px;height:27px;line-height:27px;color:#a9b7c6"><span class="s">"payload.ser"</span>)<span class="k">;</span></div>
<div class="mono" style="left:700px;top:497.8px;height:27px;line-height:27px;color:#a9b7c6">ObjectOutputStream objectOutputStream = <span class="k">new </span>ObjectOutputStream(fileOutputStream)<span class="k">;</span></div>
<div class="mono" style="left:700px;top:524.8px;height:27px;line-height:27px;color:#a9b7c6">objectOutputStream.writeObject(<u>handler</u>)<span class="k">;</span></div>
<div class="mono" style="left:700px;top:578.8px;height:27px;line-height:27px;color:#a9b7c6"><span class="c">// </span><span class="c cj">反序列化</span></div>
<div style="left:1242px;top:606.5px;width:59px;height:22px;border-radius:4px;background:#363636"></div>
<div style="left:1247.50px;top:608.16px;font-size:16px;line-height:20px;color:#7a7a7a;letter-spacing:0.806px;">name:</div>
<div class="mono" style="left:700px;top:605.8px;height:27px;line-height:27px;color:#a9b7c6">FileInputStream fileInputStream = <span class="k">new </span>FileInputStream(</div>
<div class="mono" style="left:1303px;top:605.8px;height:27px;line-height:27px;color:#a9b7c6"><span class="s">"payload.ser"</span>)<span class="k">;</span></div>
<div class="mono" style="left:700px;top:632.8px;height:27px;line-height:27px;color:#a9b7c6">ObjectInputStream objectInputStream = <span class="k">new </span>ObjectInputStream(fileInputStream)<span class="k">;</span></div>
<div class="mono" style="left:700px;top:659.8px;height:27px;line-height:27px;color:#a9b7c6">objectInputStream.readObject()<span class="k">;</span></div>
<div style="left:621px;top:677px;width:713px;height:10px;background:rgba(140,140,140,.38);"></div>
<div style="left:1878px;top:108px;width:13px;height:13px;background:#c9a21f;"></div>
<div style="left:1875px;top:156px;width:18px;height:3px;background:#c9a21f;"></div>
<div style="left:1875px;top:165px;width:18px;height:3px;background:#c9a21f;"></div>
<div style="left:1875px;top:174px;width:18px;height:3px;background:#c9a21f;"></div>
<div style="left:1875px;top:196px;width:18px;height:3px;background:#c9a21f;"></div>
<div style="left:1875px;top:517px;width:18px;height:3px;background:#c9a21f;"></div>
<div style="left:1875px;top:522px;width:18px;height:3px;background:#c9a21f;"></div>
<div style="left:1875px;top:526px;width:18px;height:3px;background:#c9a21f;"></div>
<div style="left:1875px;top:539px;width:18px;height:3px;background:#c9a21f;"></div>
<div style="left:1875px;top:544px;width:18px;height:3px;background:#c9a21f;"></div>
<div style="left:1875px;top:557px;width:18px;height:3px;background:#c9a21f;"></div>
<div style="left:1881px;top:521px;width:11px;height:93px;background:rgba(150,150,150,.36);"></div>
<!-- editor tabs -->
<div style="left:494px;top:71px;width:1399px;height:34px;background:#3c3f41;"></div>
<div style="left:494px;top:71px;width:122px;height:30px;background:#4e5254;"></div>
<div style="left:494px;top:101px;width:122px;height:4px;background:#747a80;"></div>
<div style="left:903px;top:71px;width:955px;height:33px;background:#45443d;"></div>
<svg style="left:504px;top:78px;" width="20" height="20" viewBox="0 0 16 16"><circle cx="8" cy="8" r="7.200" fill="#3e90ad"/><path fill="none" stroke="#285062" stroke-width="1.300" d="M9.90 10.50A2.900 2.900 0 1 1 9.90 6.50"/><path fill="#62b543" d="M10.700 0v6.800L16.300 3.400z"/></svg>
<div style="left:529.00px;top:79.46px;font-size:16px;line-height:20px;color:#bbbbbb;letter-spacing:-0.176px;">test.java</div>
<svg style="left:595px;top:82px;" width="12" height="12" viewBox="0 0 12 12"><path stroke="#6e7173" stroke-width="1.2" fill="none" d="M1.4000000000000004 1.4000000000000004L10.6 10.6M10.6 1.4000000000000004L1.4000000000000004 10.6"/></svg>
<svg style="left:625px;top:78px;" width="20" height="20" viewBox="0 0 16 16"><circle cx="8" cy="8" r="7.200" fill="#3e90ad"/><path fill="none" stroke="#285062" stroke-width="1.300" d="M10.10 10.30A2.900 2.900 0 1 1 10.10 6.30"/></svg>
<div style="left:649.00px;top:79.46px;font-size:16px;line-height:20px;color:#bbbbbb;letter-spacing:0.051px;">InvocationHandlerExample.java</div>
<svg style="left:882.5px;top:82px;" width="12" height="12" viewBox="0 0 12 12"><path stroke="#6e7173" stroke-width="1.2" fill="none" d="M1.4000000000000004 1.4000000000000004L10.6 10.6M10.6 1.4000000000000004L1.4000000000000004 10.6"/></svg>
<svg style="left:913px;top:78px;" width="20" height="20" viewBox="0 0 16 16"><g fill="#8b9399"><path d="M3.500 2.380A7.200 7.200 0 0 0 3.500 13.620z"/><path d="M12.500 2.380A7.200 7.200 0 0 1 12.500 13.620z"/></g><path fill="#3e90ad" d="M4 2.010A7.200 7.200 0 0 1 12 2.010V13.990A7.200 7.200 0 0 1 4 13.990z"/><path fill="none" stroke="#285062" stroke-width="1.300" d="M10.10 10.30A2.900 2.900 0 1 1 10.10 6.30"/><rect x="11" y="11.900" width="5" height="4" fill="#aeb4b9"/><path fill="none" stroke="#aeb4b9" stroke-width="1" d="M12.200 12v-1.200a1.300 1.300 0 0 1 2.600 0V12"/></svg>
<div style="left:937.00px;top:79.46px;font-size:16px;line-height:20px;color:#bbbbbb;letter-spacing:-0.296px;">ClassLoader.java</div>
<svg style="left:1063px;top:82px;" width="12" height="12" viewBox="0 0 12 12"><path stroke="#6e7173" stroke-width="1.2" fill="none" d="M1.4000000000000004 1.4000000000000004L10.6 10.6M10.6 1.4000000000000004L1.4000000000000004 10.6"/></svg>
<svg style="left:1093px;top:78px;" width="20" height="20" viewBox="0 0 16 16"><circle cx="7.700" cy="7.800" r="7" fill="#3e90ad"/><path fill="none" stroke="#285062" stroke-width="1.300" d="M9.60 10.10A2.900 2.900 0 1 1 9.60 6.10"/><rect x="11.100" y="11.600" width="5" height="4.100" fill="#aeb4b9"/><path fill="none" stroke="#aeb4b9" stroke-width="1" d="M12.300 11.800v-1.300a1.300 1.300 0 0 1 2.600 0v1.300"/></svg>
<div style="left:1117.00px;top:79.46px;font-size:16px;line-height:20px;color:#bbbbbb;letter-spacing:-0.286px;width:100px;overflow:hidden;">Launcher.class</div>
<svg style="left:1223px;top:82px;" width="12" height="12" viewBox="0 0 12 12"><path stroke="#6e7173" stroke-width="1.2" fill="none" d="M1.4000000000000004 1.4000000000000004L10.6 10.6M10.6 1.4000000000000004L1.4000000000000004 10.6"/></svg>
<svg style="left:1253px;top:78px;" width="20" height="20" viewBox="0 0 16 16"><circle cx="7.700" cy="7.800" r="7" fill="#3e90ad"/><path fill="none" stroke="#285062" stroke-width="1.300" d="M9.60 10.10A2.900 2.900 0 1 1 9.60 6.10"/><rect x="11.100" y="11.600" width="5" height="4.100" fill="#aeb4b9"/><path fill="none" stroke="#aeb4b9" stroke-width="1" d="M12.300 11.800v-1.300a1.300 1.300 0 0 1 2.600 0v1.300"/></svg>
<div style="left:1277.00px;top:79.46px;font-size:16px;line-height:20px;color:#bbbbbb;letter-spacing:0.063px;width:165px;overflow:hidden;">ObjectInputStream.java</div>
<svg style="left:1448px;top:82px;" width="12" height="12" viewBox="0 0 12 12"><path stroke="#6e7173" stroke-width="1.2" fill="none" d="M1.4000000000000004 1.4000000000000004L10.6 10.6M10.6 1.4000000000000004L1.4000000000000004 10.6"/></svg>
<svg style="left:1478px;top:78px;" width="20" height="20" viewBox="0 0 16 16"><circle cx="7.700" cy="7.800" r="7" fill="#3e90ad"/><path fill="none" stroke="#285062" stroke-width="1.300" d="M9.60 10.10A2.900 2.900 0 1 1 9.60 6.10"/><rect x="11.100" y="11.600" width="5" height="4.100" fill="#aeb4b9"/><path fill="none" stroke="#aeb4b9" stroke-width="1" d="M12.300 11.800v-1.300a1.300 1.300 0 0 1 2.600 0v1.300"/></svg>
<div style="left:1502.00px;top:79.46px;font-size:16px;line-height:20px;color:#bbbbbb;letter-spacing:0.212px;">NativeMethodAccessorImpl.class</div>
<svg style="left:1751px;top:82px;" width="12" height="12" viewBox="0 0 12 12"><path stroke="#6e7173" stroke-width="1.2" fill="none" d="M1.4000000000000004 1.4000000000000004L10.6 10.6M10.6 1.4000000000000004L1.4000000000000004 10.6"/></svg>
<svg style="left:1781px;top:78px;" width="20" height="20" viewBox="0 0 16 16"><circle cx="7.700" cy="7.800" r="7" fill="#3e90ad"/><path fill="none" stroke="#285062" stroke-width="1.300" d="M9.60 10.10A2.900 2.900 0 1 1 9.60 6.10"/><rect x="11.100" y="11.600" width="5" height="4.100" fill="#aeb4b9"/><path fill="none" stroke="#aeb4b9" stroke-width="1" d="M12.300 11.800v-1.300a1.300 1.300 0 0 1 2.600 0v1.300"/></svg>
<div style="left:1805.00px;top:79.46px;font-size:16px;line-height:20px;color:#bbbbbb;letter-spacing:0.367px;">Anr</div>
<svg style="left:1837px;top:82px;" width="12" height="12" viewBox="0 0 12 12"><path stroke="#6e7173" stroke-width="1.2" fill="none" d="M1.4000000000000004 1.4000000000000004L10.6 10.6M10.6 1.4000000000000004L1.4000000000000004 10.6"/></svg>
<div style="left:1858px;top:71px;width:35px;height:33px;background:#3c3f41;"></div>
<svg style="left:1862px;top:84px;" width="28" height="14" viewBox="0 0 28 14"><path fill="#afb1b3" d="M0 3.500h6L3 7.500z"/><g fill="#afb1b3"><rect x="8" y="1" width="10" height="1.500"/><rect x="8" y="4" width="10" height="1.500"/><rect x="8" y="7" width="10" height="1.500"/><rect x="8" y="10" width="10" height="1.500"/></g></svg>
<div style="left:1882.50px;top:86.71px;font-size:9.5px;line-height:12px;color:#afb1b3;">4</div>
<!-- breadcrumbs -->
<div style="left:494px;top:689px;width:1399px;height:26px;background:#313335;"></div>
<div style="left:622.00px;top:692.63px;font-size:15.5px;line-height:19px;color:#bbbbbb;letter-spacing:0.754px;">test</div>
<svg style="left:659px;top:695.5px;" width="6" height="12" viewBox="0 0 6 12"><path fill="none" stroke="#6e7173" stroke-width="1.100" d="M1 1.500l3.500 4.500L1 10.500"/></svg>
<div style="left:674.00px;top:692.63px;font-size:15.5px;line-height:19px;color:#bbbbbb;letter-spacing:0.180px;">main()</div>
<!-- run panel -->
<div style="left:28px;top:715px;width:1865px;height:1px;background:#323232;"></div>
<div style="left:28px;top:716px;width:1865px;height:34px;background:#3c3f41;"></div>
<div style="left:35.00px;top:724.46px;font-size:16px;line-height:20px;color:#bbbbbb;letter-spacing:-0.449px;">Run:</div>
<svg style="left:92px;top:724px;" width="17" height="17" viewBox="0 0 17 17"><rect x="3.500" y=".5" width="13" height="11" fill="none" stroke="#5d6062"/><rect x=".5" y="3.500" width="13" height="12" fill="#3c3f41" stroke="#6b6e70"/><rect x="2.500" y="6.500" width="9" height="7" fill="#35576a"/></svg>
<div style="left:115.00px;top:724.46px;font-size:16px;line-height:20px;color:#bbbbbb;letter-spacing:0.553px;">test</div>
<svg style="left:151px;top:727px;" width="12" height="12" viewBox="0 0 12 12"><path stroke="#6e7173" stroke-width="1.2" fill="none" d="M1.4000000000000004 1.4000000000000004L10.6 10.6M10.6 1.4000000000000004L1.4000000000000004 10.6"/></svg>
<div style="left:76px;top:747px;width:100px;height:3px;background:#747a80;"></div>
<svg style="left:1832px;top:723px;" width="20" height="20" viewBox="0 0 20 20"><path fill="#afb1b3" fill-rule="evenodd" d="M12.09 4.27L11.73 1.88L8.27 1.88L7.91 4.27A6.1 6.1 0 0 0 6.08 5.33L3.83 4.45L2.11 7.44L3.99 8.94A6.1 6.1 0 0 0 3.99 11.06L2.11 12.56L3.83 15.55L6.08 14.67A6.1 6.1 0 0 0 7.91 15.73L8.27 18.12L11.73 18.12L12.09 15.73A6.1 6.1 0 0 0 13.92 14.67L16.17 15.55L17.89 12.56L16.01 11.06A6.1 6.1 0 0 0 16.01 8.94L17.89 7.44L16.17 4.45L13.92 5.33A6.1 6.1 0 0 0 12.09 4.27ZM12.80 10A2.8 2.8 0 1 0 7.20 10A2.8 2.8 0 1 0 12.80 10Z"/></svg>
<div style="left:1868px;top:732px;width:16px;height:2.5px;background:#afb1b3;"></div>
<div style="left:101px;top:750px;width:1792px;height:240px;background:#2b2b2b;"></div>
<div style="left:64px;top:750px;width:1px;height:240px;background:#323232;"></div>
<svg style="left:40px;top:761px;" width="14" height="16" viewBox="0 0 14 16"><path fill="#499c54" d="M1 .5v15l12.500-7.500z"/></svg>
<div style="left:40px;top:797px;width:12px;height:12px;background:#5e6163;"></div>
<svg style="left:37px;top:829px;" width="19" height="16" viewBox="0 0 19 16"><path fill="#5e6163" d="M0 3h4.500L6 .5h7L14.500 3H19v13H0z"/><circle cx="9.500" cy="9" r="4" fill="#3c3f41"/><circle cx="9.500" cy="9" r="2.300" fill="#5e6163"/></svg>
<svg style="left:37px;top:861px;" width="19" height="20" viewBox="0 0 19 20"><g fill="#5e6163"><ellipse cx="8" cy="10" rx="4.400" ry="5.600"/><path d="M5 4.600a3 2.600 0 0 1 6 0z"/><g stroke="#5e6163" stroke-width="1.400" fill="none"><path d="M1 6.600l3.400 1.400M15 6.600l-3.400 1.400M.5 10.600H4M1.400 15l3-1.600M5.400 2.600L4.200.8M10.600 2.600L11.800.8"/></g></g><path fill="#3c3f41" d="M9 9h10v11H9z"/><path fill="#5e6163" d="M11 12h4.500v-2l3.500 3.200-3.500 3.200v-2H11zM18 16.600v2.400h-4.500v2L10 17.800l3.500-3.200v2z" transform="translate(0,-1.500)"/></svg>
<svg style="left:38px;top:897px;" width="18" height="18" viewBox="0 0 18 18"><path fill="none" stroke="#5e6163" stroke-width="1.600" d="M5 4V.8h12.200v16.400H5V14"/><path fill="#5e6163" d="M0 8.200h7V5l5 4-5 4V9.800H0z"/></svg>
<div style="left:34px;top:926px;width:23px;height:1px;background:#515456;"></div>
<svg style="left:38px;top:942px;" width="16" height="13" viewBox="0 0 16 13"><g fill="#c8cacb"><rect x="0" y="0" width="7" height="5.700"/><rect x="8.600" y="0" width="7" height="5.700"/><rect x="0" y="7.300" width="15.600" height="5.700"/></g></svg>
<div style="left:42.00px;top:967.30px;font-size:15px;line-height:19px;color:#9a9c9e;">»</div>
<svg style="left:76px;top:761.5px;" width="14" height="15" viewBox="0 0 14 15"><path fill="none" stroke="#afb1b3" stroke-width="2.100" d="M7 14V1.500M1.500 7L7 1.500 12.500 7"/></svg>
<svg style="left:76px;top:796.5px;" width="14" height="15" viewBox="0 0 14 15"><path fill="none" stroke="#afb1b3" stroke-width="2.100" d="M7 1v12.500M1.500 8L7 13.500 12.500 8"/></svg>
<div style="left:69px;top:824px;width:28px;height:28px;border-radius:4px;background:#55585a"></div>
<svg style="left:75px;top:830px;" width="17" height="17" viewBox="0 0 17 17"><g fill="none" stroke="#afb1b3" stroke-width="1.900"><path d="M0 1.200h16M0 7h12.400a3 3 0 0 1 0 6H9.500"/><path d="M0 13h3.200M4.600 13h1.200"/></g><path fill="#afb1b3" d="M10.500 9.800v6.400L6.300 13z"/></svg>
<div style="left:69px;top:858px;width:28px;height:28px;border-radius:4px;background:#55585a"></div>
<svg style="left:75px;top:864px;" width="17" height="15" viewBox="0 0 17 15"><g fill="#afb1b3"><rect x="0" y="12.600" width="16.400" height="1.900"/><rect x="0" y="2.400" width="5.600" height="1.900"/><rect x="0" y="7.400" width="5.600" height="1.900"/><path d="M10.900 0h2v6h3.100L11.900 10.600 7.800 6h3.100z"/></g></svg>
<svg style="left:74px;top:897px;" width="18" height="17" viewBox="0 0 18 17"><g fill="#afb1b3"><rect x="4" y="0" width="10" height="3.800"/><path d="M0 5h18v7h-3.200V9.400H3.200V12H0z"/><path d="M4.400 10.800h9.200v6H4.400zM5.800 12.200v3.200h6.400v-3.200z" fill-rule="evenodd"/></g><rect x="14.400" y="6.400" width="1.800" height="1.200" fill="#3c3f41"/></svg>
<svg style="left:76px;top:931px;" width="14" height="17" viewBox="0 0 14 17"><g fill="#afb1b3"><rect x="4.200" y="0" width="5.600" height="1.800"/><rect x="0" y="1.700" width="14" height="2"/><path d="M1.500 5h11v9.800a1.400 1.400 0 0 1-1.400 1.400H2.900a1.400 1.400 0 0 1-1.400-1.400z"/></g></svg>
<div class="mono" style="left:117px;top:748.8px;height:27px;line-height:27px;color:#ff6b68">    at java.io.ObjectStreamClass.invokeReadObject(<u style="color:#7f7f7f">ObjectStreamClass.java:1017</u>)</div>
<div class="mono" style="left:117px;top:775.8px;height:27px;line-height:27px;color:#ff6b68">    at java.io.ObjectInputStream.readSerialData(<u style="color:#7f7f7f">ObjectInputStream.java:1893</u>)</div>
<div class="mono" style="left:117px;top:802.8px;height:27px;line-height:27px;color:#ff6b68">    at java.io.ObjectInputStream.readOrdinaryObject(<u style="color:#7f7f7f">ObjectInputStream.java:1798</u>)</div>
<div class="mono" style="left:117px;top:829.8px;height:27px;line-height:27px;color:#ff6b68">    at java.io.ObjectInputStream.readObject0(<u style="color:#7f7f7f">ObjectInputStream.java:1350</u>)</div>
<div class="mono" style="left:117px;top:856.8px;height:27px;line-height:27px;color:#ff6b68">    at java.io.ObjectInputStream.readObject(<u style="color:#7f7f7f">ObjectInputStream.java:370</u>)</div>
<div class="mono" style="left:117px;top:883.8px;height:27px;line-height:27px;color:#ff6b68">    at com.myproject.test.main(<u style="color:#287bde">test.java:111</u>)</div>
<div class="mono" style="left:117px;top:937.8px;height:27px;line-height:27px;color:#bbbbbb">Process finished with exit code 1</div>
<div style="left:1881px;top:797px;width:11px;height:193px;background:rgba(150,150,150,.36);"></div>
<svg style="left:740px;top:940px" width="1160" height="80" viewBox="0 0 1160 80"><g transform="scale(1.1,1)" font-family="Liberation Serif, serif" font-size="41.500" fill="none" stroke="#bdbdbd" stroke-width=".75" text-anchor="middle"><text y="52" x="26.14 51.14 76.14 101.14 126.14 151.14 176.14 201.14 226.14 251.14 276.14 301.14 326.14 351.14 376.14 401.14 426.14 451.14 476.14 501.14 526.14 551.14 576.14 601.14 626.14 651.14 676.14 701.14 726.14 751.14 776.14 801.14 826.14 851.14 876.14 901.14 926.14 951.14 976.14 1001.14 1026.14">AaronLuo's Blog from byAaronluo.github.io</text></g></svg>
<!-- calculator -->
<div style="left:1498px;top:316px;width:320px;height:531px;background:radial-gradient(ellipse 120px 70px at 0 0,rgba(224,214,214,.6),rgba(224,214,214,0)),linear-gradient(180deg,#d1d1d1 0%,#cbcbcb 20%,#c5c5c5 38%,#c0c0c0 100%);box-shadow:0 2px 14px rgba(0,0,0,.5)"></div>
<div style="left:1510px;top:324px;font-size:12px;line-height:18px;color:#000;font-family:"Liberation Sans","Noto Sans CJK SC",sans-serif">计算器</div>
<div style="left:1698px;top:332px;width:10px;height:1px;background:#000;"></div>
<div style="left:1744px;top:327px;width:10px;height:10px;border:1px solid #000;box-sizing:border-box"></div>
<svg style="left:1789px;top:326px;" width="12" height="12" viewBox="0 0 12 12"><path stroke="#000" stroke-width="1.100" fill="none" d="M.5.5l11 11M11.500.5l-11 11"/></svg>
<div style="left:1510px;top:364px;width:16px;height:1px;background:#000;"></div>
<div style="left:1510px;top:368.3px;width:16px;height:1px;background:#000;"></div>
<div style="left:1510px;top:372.6px;width:16px;height:1px;background:#000;"></div>
<div style="left:1545px;top:354px;font-size:20px;line-height:30px;font-weight:700;color:#000;font-family:"Liberation Sans","Noto Sans CJK SC",sans-serif">标准</div>
<svg style="left:1608px;top:362px;" width="16" height="13" viewBox="0 0 16 13"><path fill="none" stroke="#000" stroke-width="1.100" d="M1 2.800V.6h13.400v11.400h-5.400M8.400.6v4.800h6M1 12l5.400-5.400M2.600 6.600h3.800v3.800"/></svg>
<svg style="left:1789px;top:358px;" width="20" height="20" viewBox="0 0 20 20"><path fill="none" stroke="#000" stroke-width="1.200" d="M3.400 6.200A7.600 7.600 0 1 1 2.400 10M3.400 6.200V2.600M3.400 6.200H7M10 5.400v5l3.400 2"/></svg>
<div style="left:1700px;top:414px;width:106px;text-align:right;font-size:46px;line-height:56px;font-weight:400;-webkit-text-stroke:.85px #000;color:#000;transform:scale(.96,1);transform-origin:100% 50%">0</div>
<div style="left:1518.00px;top:496.27px;font-size:12.5px;line-height:16px;color:#999999;">MC</div>
<div style="left:1570.00px;top:496.27px;font-size:12.5px;line-height:16px;color:#999999;">MR</div>
<div style="left:1621.00px;top:496.27px;font-size:12.5px;line-height:16px;color:#000;font-weight:700;">M+</div>
<div style="left:1675.00px;top:496.27px;font-size:12.5px;line-height:16px;color:#000;font-weight:700;">M-</div>
<div style="left:1727.00px;top:496.27px;font-size:12.5px;line-height:16px;color:#000;font-weight:700;">MS</div>
<div style="left:1780.00px;top:496.27px;font-size:12.5px;line-height:16px;color:#999999;">M</div>
<div style="left:1791.00px;top:495.38px;font-size:9px;line-height:11px;color:#9b9b9b;font-weight:700;">˅</div>
<div style="left:1501.5px;top:521px;width:76.7px;height:52px;background:#dddddd"></div>
<div style="left:1501.5px;top:533px;width:76.7px;text-align:center;font-size:17px;line-height:26px;color:#000">%</div>
<div style="left:1580.2px;top:521px;width:76.7px;height:52px;background:#dddddd"></div>
<div style="left:1580.2px;top:535px;width:76.7px;text-align:center;font-size:14.500px;line-height:26px;color:#000">CE</div>
<div style="left:1659px;top:521px;width:76.7px;height:52px;background:#dddddd"></div>
<div style="left:1659px;top:535px;width:76.7px;text-align:center;font-size:14.500px;line-height:26px;color:#000">C</div>
<div style="left:1737.2px;top:521px;width:76.7px;height:52px;background:#dddddd"></div>
<svg style="left:1767.55px;top:541.0px;" width="17" height="12" viewBox="0 0 17 12"><path fill="none" stroke="#000" stroke-width="1.100" d="M5.500.6H16.400V11.400H5.500L.8 6zM8 3.400l5 5.200M13 3.400L8 8.600"/></svg>
<div style="left:1501.5px;top:575px;width:76.7px;height:52px;background:#dddddd"></div>
<div style="left:1501.5px;top:589px;width:76.7px;text-align:center;font-size:15px;line-height:26px;color:#000;font-family:'Liberation Serif',serif"><span style="font-size:10px;position:relative;top:-4px">1</span>/<i>x</i></div>
<div style="left:1580.2px;top:575px;width:76.7px;height:52px;background:#dddddd"></div>
<div style="left:1580.2px;top:589px;width:76.7px;text-align:center;font-size:16px;line-height:26px;color:#000;font-family:'Liberation Serif',serif"><i>x</i><span style="font-size:10px;position:relative;top:-6px;left:1px">2</span></div>
<div style="left:1659px;top:575px;width:76.7px;height:52px;background:#dddddd"></div>
<div style="left:1659px;top:589px;width:76.7px;text-align:center;font-size:15px;line-height:26px;color:#000;font-family:'Liberation Serif','DejaVu Sans',serif"><span style="font-size:9px;position:relative;top:-5px;left:2px">2</span>√<i style="text-decoration:overline">x</i></div>
<div style="left:1737.2px;top:575px;width:76.7px;height:52px;background:#dddddd"></div>
<div style="left:1768.55px;top:600.5px;width:14px;height:1px;background:#000;"></div>
<div style="left:1774.55px;top:596.0px;width:2px;height:2px;background:#000;"></div>
<div style="left:1774.55px;top:604.0px;width:2px;height:2px;background:#000;"></div>
<div style="left:1737.2px;top:575px;width:76.7px;height:52px;color:transparent;font-size:10px;text-align:center">÷</div>
<div style="left:1501.5px;top:629px;width:76.7px;height:52px;background:#f3f3f3"></div>
<div style="left:1501.5px;top:642px;width:76.7px;text-align:center;font-size:19.500px;line-height:28px;font-weight:400;-webkit-text-stroke:.3px #000;color:#000">7</div>
<div style="left:1580.2px;top:629px;width:76.7px;height:52px;background:#f3f3f3"></div>
<div style="left:1580.2px;top:642px;width:76.7px;text-align:center;font-size:19.500px;line-height:28px;font-weight:400;-webkit-text-stroke:.3px #000;color:#000">8</div>
<div style="left:1659px;top:629px;width:76.7px;height:52px;background:#f3f3f3"></div>
<div style="left:1659px;top:642px;width:76.7px;text-align:center;font-size:19.500px;line-height:28px;font-weight:400;-webkit-text-stroke:.3px #000;color:#000">9</div>
<div style="left:1737.2px;top:629px;width:76.7px;height:52px;background:#dddddd"></div>
<svg style="left:1769.55px;top:649.0px;" width="12" height="12" viewBox="0 0 12 12"><path stroke="#000" stroke-width="1.100" fill="none" d="M.5.5l11 11M11.500.5l-11 11"/></svg>
<div style="left:1501.5px;top:683px;width:76.7px;height:52px;background:#f3f3f3"></div>
<div style="left:1501.5px;top:696px;width:76.7px;text-align:center;font-size:19.500px;line-height:28px;font-weight:400;-webkit-text-stroke:.3px #000;color:#000">4</div>
<div style="left:1580.2px;top:683px;width:76.7px;height:52px;background:#f3f3f3"></div>
<div style="left:1580.2px;top:696px;width:76.7px;text-align:center;font-size:19.500px;line-height:28px;font-weight:400;-webkit-text-stroke:.3px #000;color:#000">5</div>
<div style="left:1659px;top:683px;width:76.7px;height:52px;background:#f3f3f3"></div>
<div style="left:1659px;top:696px;width:76.7px;text-align:center;font-size:19.500px;line-height:28px;font-weight:400;-webkit-text-stroke:.3px #000;color:#000">6</div>
<div style="left:1737.2px;top:683px;width:76.7px;height:52px;background:#dddddd"></div>
<div style="left:1768.55px;top:708.5px;width:14px;height:1px;background:#000;"></div>
<div style="left:1501.5px;top:737px;width:76.7px;height:52px;background:#f3f3f3"></div>
<div style="left:1501.5px;top:750px;width:76.7px;text-align:center;font-size:19.500px;line-height:28px;font-weight:400;-webkit-text-stroke:.3px #000;color:#000">1</div>
<div style="left:1580.2px;top:737px;width:76.7px;height:52px;background:#f3f3f3"></div>
<div style="left:1580.2px;top:750px;width:76.7px;text-align:center;font-size:19.500px;line-height:28px;font-weight:400;-webkit-text-stroke:.3px #000;color:#000">2</div>
<div style="left:1659px;top:737px;width:76.7px;height:52px;background:#f3f3f3"></div>
<div style="left:1659px;top:750px;width:76.7px;text-align:center;font-size:19.500px;line-height:28px;font-weight:400;-webkit-text-stroke:.3px #000;color:#000">3</div>
<div style="left:1737.2px;top:737px;width:76.7px;height:52px;background:#dddddd"></div>
<div style="left:1768.55px;top:762.5px;width:14px;height:1px;background:#000;"></div>
<div style="left:1775.05px;top:756.0px;width:1px;height:14px;background:#000;"></div>
<div style="left:1501.5px;top:791px;width:76.7px;height:52px;background:#f3f3f3"></div>
<div style="left:1501.5px;top:805px;width:76.7px;text-align:center;font-size:14px;line-height:26px;color:#000"><span style="font-size:10px;position:relative;top:-4px">+</span>/<span style="font-size:10px;position:relative;top:2px">−</span></div>
<div style="left:1580.2px;top:791px;width:76.7px;height:52px;background:#f3f3f3"></div>
<div style="left:1580.2px;top:804px;width:76.7px;text-align:center;font-size:19.500px;line-height:28px;font-weight:400;-webkit-text-stroke:.3px #000;color:#000">0</div>
<div style="left:1659px;top:791px;width:76.7px;height:52px;background:#f3f3f3"></div>
<div style="left:1659px;top:804px;width:76.7px;text-align:center;font-size:15px;line-height:30px;font-weight:700;color:#000">.</div>
<div style="left:1737.2px;top:791px;width:76.7px;height:52px;background:#74a5cf"></div>
<div style="left:1768.55px;top:814.0px;width:14px;height:1px;background:#000;"></div>
<div style="left:1768.55px;top:819.0px;width:14px;height:1px;background:#000;"></div>
</div>
</body></html>
